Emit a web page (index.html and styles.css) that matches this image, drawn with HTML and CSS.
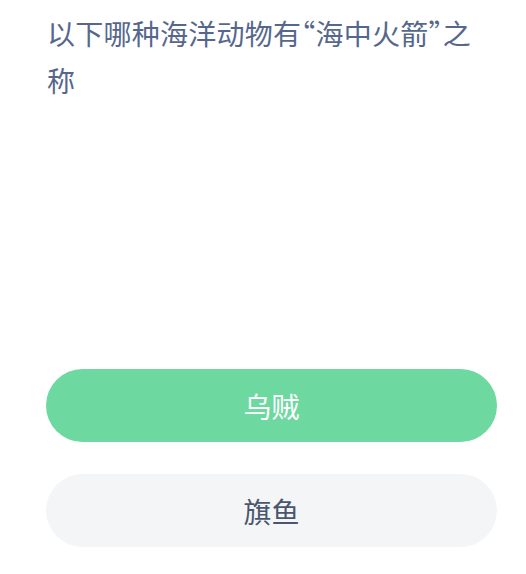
FILE: index.html
```html
<!DOCTYPE html>
<html lang="zh-CN">
<head>
<meta charset="utf-8">
<link rel="stylesheet" href="styles.css">
</head>
<body>
<div class="page">
  <h1 class="question">以下哪种海洋动物有“海中火箭”之称</h1>
  <div class="options">
    <div class="option correct">乌贼</div>
    <div class="option">旗鱼</div>
  </div>
</div>
</body>
</html>
```
FILE: styles.css
```css
html, body {
  margin: 0;
  padding: 0;
  background: #ffffff;
}
.page {
  width: 526px;
  height: 574px;
  box-sizing: border-box;
  padding: 10px 29px 0 46px;
  display: flex;
  flex-direction: column;
  font-family: "Noto Sans CJK SC", "Noto Sans", sans-serif;
}
.question {
  margin: 0;
  max-width: 440px;
  font-size: 28px;
  font-weight: 400;
  line-height: 47px;
  letter-spacing: 0.25px;
  color: #56678d;
  padding-left: 1px;
  font-feature-settings: "halt" 1;
}
.options {
  margin-top: 265px;
  display: flex;
  flex-direction: column;
  gap: 32px;
}
.option {
  height: 73px;
  border-radius: 37px;
  background: #f3f5f7;
  color: #4b566e;
  font-size: 28px;
  display: flex;
  align-items: center;
  justify-content: center;
}
.option.correct {
  background: #6dd8a0;
  color: #ffffff;
}
```
